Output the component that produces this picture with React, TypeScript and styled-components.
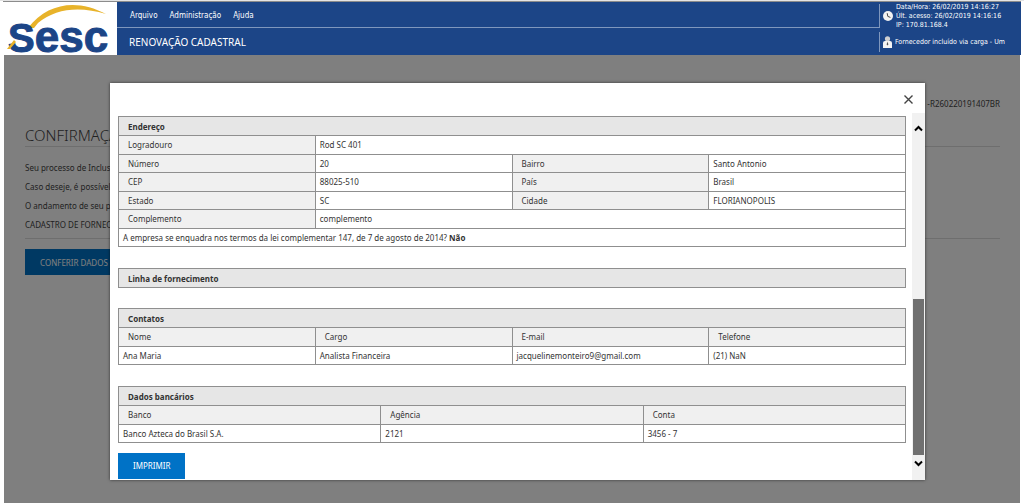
import React from "react";
import styled, { createGlobalStyle } from "styled-components";

const sans = `"Noto Sans", "Open Sans", sans-serif`;
const condensed = `"DejaVu Sans Condensed", "DejaVu Sans", sans-serif`;

const GlobalStyle = createGlobalStyle`
  *, *::before, *::after { box-sizing: border-box; }
  body { margin: 0; background: #fff; font-family: ${condensed}; font-size: 8px; color: #333; }
  button { font: inherit; border: 0; padding: 0; cursor: pointer; }
`;

const Page = styled.div`
  display: flex;
  flex-direction: column;
  min-height: 100vh;
  padding: 0 3px;
  border-top: 1px solid #e4e4e4;
`;

const Header = styled.header`
  display: flex;
  height: 54px;
  border-top: 1px solid #8c8c8c;
  background: #1c4587;
  color: #fff;
`;

const LogoBox = styled.a`
  display: block;
  flex: none;
  width: 114px;
  background: #fff;
`;

const LogoDrawing = styled.svg`
  display: block;
  overflow: visible;
`;

const HeaderMain = styled.div`
  display: flex;
  flex: 1;
  flex-direction: column;
`;

const Menu = styled.nav`
  display: flex;
  align-items: center;
  gap: 12px;
  height: 26px;
  padding: 2px 12px 0 13px;
  border-bottom: 1px solid #7f97bd;
`;

const MenuLink = styled.a`
  color: #fff;
  text-decoration: none;
`;

const PageName = styled.div`
  display: flex;
  flex: 1;
  align-items: center;
  padding: 0 12px;
  font: 10px/14px ${sans};
`;

const Session = styled.div`
  display: flex;
  flex: none;
  flex-direction: column;
  gap: 4px;
  width: 142px;
  padding-top: 2px;
  font-size: 7px;
`;

const SessionItem = styled.div<{ $tall?: boolean }>`
  display: flex;
  align-items: center;
  gap: 3px;
  height: ${(p) => (p.$tall ? 24 : 20)}px;
  padding-left: 3px;
  border-left: 1px solid #7f97bd;
  line-height: 9px;
  white-space: nowrap;
`;

const Main = styled.main`
  position: relative;
  flex: 1;
  margin: 0 1px;
  padding: 42px 20px 0 21px;
  font: 8px/19px ${sans};
  color: #444;
`;

const Protocol = styled.div`
  text-align: right;
  line-height: 14px;
`;

const Title = styled.h1`
  margin: 14px 0 11px;
  border-bottom: 1px solid #ddd;
  font: 300 15px/21px ${sans};
`;

const Line = styled.p`
  margin: 0;
`;

const Divider = styled.hr`
  margin: 4px 0 10px;
  border: 0;
  border-top: 1px solid #ddd;
`;

const ActionButton = styled.button`
  height: 26px;
  padding: 0 15px;
  background: #0072c6;
  color: #fff;
`;

const Overlay = styled.div`
  position: absolute;
  inset: 0;
  display: flex;
  padding: 28px 95px 23px 106px;
  background: rgba(0, 0, 0, 0.5);
  font: 8px/12px ${sans};
  color: #333;
`;

const Modal = styled.section`
  display: flex;
  flex: 1;
  flex-direction: column;
  background: #fff;
  box-shadow: 0 0 3px rgba(0, 0, 0, 0.6);
`;

const ModalTop = styled.div`
  display: flex;
  justify-content: flex-end;
  height: 30px;
  padding: 11px 11px 0 0;
`;

const CloseButton = styled.button`
  display: flex;
  width: 11px;
  height: 11px;
  background: none;
`;

const ModalBody = styled.div`
  display: flex;
  flex: 1;
`;

const Content = styled.div`
  flex: 1;
  padding: 3px 6px 0 8px;
`;

const ScrollTrack = styled.div`
  display: flex;
  flex: none;
  flex-direction: column;
  align-items: center;
  width: 13px;
  padding: 12px 0 13px;
  background: #f1f1f1;
`;

const ScrollArrow = styled.button`
  display: flex;
  background: none;
`;

const ScrollThumb = styled.div`
  width: 11px;
  height: 156px;
  margin: auto 0 5px;
  background: #707070;
`;

const Table = styled.table<{ $gap: number }>`
  width: 100%;
  margin-bottom: ${(p) => p.$gap}px;
  border-collapse: collapse;
  table-layout: fixed;

  tr:nth-child(even) { height: 19px; }
`;

const Cell = styled.td`
  height: 18px;
  padding: 0 4px;
  border: 1px solid #8f8f8f;
  text-align: left;
  white-space: nowrap;
`;

const Label = styled.th`
  height: 18px;
  padding: 0 9px;
  border: 1px solid #8f8f8f;
  background: #f0f0f0;
  font-weight: 400;
  text-align: left;
`;

const Heading = styled.th`
  height: 19px;
  padding: 1px 9px 0;
  border: 1px solid #8f8f8f;
  background: #e6e6e6;
  text-align: left;
`;

const PrintButton = styled(ActionButton)`
  display: block;
`;

const Logo = () => (
  <LogoDrawing width="114" height="53" viewBox="3 2 114 53" role="img" aria-label="Sesc">
    <path d="M28 28 C48 2 78 -1 106 14 C80 6 56 8 38 23 L34 28 Z" fill="#e8b32a" />
    <text x="8" y="52" fontFamily="Liberation Sans" fontWeight="700" fontSize="44" fill="#1c4587" stroke="#1c4587" strokeWidth="1">
      <tspan fontSize="40">S</tspan>esc
    </text>
    <path d="M7 49 L14 40 L16 42 L10 49 Z" fill="#e8b32a" />
  </LogoDrawing>
);

const ClockIcon = () => (
  <svg width="10" height="10" viewBox="0 0 10 10" aria-hidden="true">
    <circle cx="5" cy="5" r="5" fill="#f2f2f2" />
    <path d="M4.2 2.2 L4.8 5.4 L7.4 6.4" fill="none" stroke="#444" strokeWidth="1" />
  </svg>
);

const UserIcon = () => (
  <svg width="9" height="12" viewBox="0 0 9 12" aria-hidden="true">
    <circle cx="4.5" cy="2.8" r="2.6" fill="#d0d0d0" />
    <path d="M0 12 V7 Q0 5 2 5 H7 Q9 5 9 7 V12 Z" fill="#f4f4f4" />
    <path d="M4.5 5.5 L5.4 8.5 L4.5 9.5 L3.6 8.5 Z" fill="#555" />
  </svg>
);

const Chevron = ({ down }: { down?: boolean }) => (
  <svg width="9" height="7" viewBox="0 0 9 7" aria-hidden="true">
    <path d={down ? "M1 1.5 L4.5 5 L8 1.5" : "M1 5.5 L4.5 2 L8 5.5"} fill="none" stroke="#000" strokeWidth="2" />
  </svg>
);

const menu = ["Arquivo", "Administração", "Ajuda"];

const address = [
  ["Número", "20", "Bairro", "Santo Antonio"],
  ["CEP", "88025-510", "País", "Brasil"],
  ["Estado", "SC", "Cidade", "FLORIANOPOLIS"],
];

type GridProps = { title: string; columns: string[]; rows: string[][]; gap: number };

const DataTable = ({ title, columns, rows, gap }: GridProps) => (
  <Table $gap={gap}>
    <thead>
      <tr>
        <Heading colSpan={columns.length}>{title}</Heading>
      </tr>
      <tr>
        {columns.map((c) => (
          <Label key={c} scope="col">{c}</Label>
        ))}
      </tr>
    </thead>
    <tbody>
      {rows.map((row) => (
        <tr key={row[0]}>
          {row.map((value) => (
            <Cell key={value}>{value}</Cell>
          ))}
        </tr>
      ))}
    </tbody>
  </Table>
);

export default function App() {
  return (
    <Page>
      <GlobalStyle />
      <Header>
        <LogoBox href="#">
          <Logo />
        </LogoBox>
        <HeaderMain>
          <Menu>
            {menu.map((m) => (
              <MenuLink key={m} href="#">{m}</MenuLink>
            ))}
          </Menu>
          <PageName>RENOVAÇÃO CADASTRAL</PageName>
        </HeaderMain>
        <Session>
          <SessionItem $tall>
            <ClockIcon />
            <div>
              Data/Hora: 26/02/2019 14:16:27
              <br />
              Últ. acesso: 26/02/2019 14:16:16
              <br />
              IP: 170.81.168.4
            </div>
          </SessionItem>
          <SessionItem>
            <UserIcon />
            Fornecedor incluído via carga - Um
          </SessionItem>
        </Session>
      </Header>
      <Main>
        <Protocol>-R260220191407BR</Protocol>
        <Title>CONFIRMAÇÃO</Title>
        <Line>Seu processo de Inclusão</Line>
        <Line>Caso deseje, é possível</Line>
        <Line>O andamento de seu p</Line>
        <Line>CADASTRO DE FORNEC</Line>
        <Divider />
        <ActionButton type="button">CONFERIR DADOS</ActionButton>
        <Overlay>
          <Modal role="dialog" aria-label="Dados">
            <ModalTop>
              <CloseButton type="button" aria-label="Fechar">
                <svg width="11" height="11" viewBox="0 0 11 11" aria-hidden="true">
                  <path d="M1.5 1.5 L9.5 9.5 M9.5 1.5 L1.5 9.5" stroke="#444" strokeWidth="1.4" />
                </svg>
              </CloseButton>
            </ModalTop>
            <ModalBody>
              <Content>
                <Table $gap={21}>
                  <tbody>
                    <tr>
                      <Heading colSpan={4}>Endereço</Heading>
                    </tr>
                    <tr>
                      <Label scope="row">Logradouro</Label>
                      <Cell colSpan={3}>Rod SC 401</Cell>
                    </tr>
                    {address.map(([a, b, c, d]) => (
                      <tr key={a}>
                        <Label scope="row">{a}</Label>
                        <Cell>{b}</Cell>
                        <Label scope="row">{c}</Label>
                        <Cell>{d}</Cell>
                      </tr>
                    ))}
                    <tr>
                      <Label scope="row">Complemento</Label>
                      <Cell colSpan={3}>complemento</Cell>
                    </tr>
                    <tr>
                      <Cell colSpan={4}>
                        A empresa se enquadra nos termos da lei complementar 147, de 7 de agosto de 2014? <b>Não</b>
                      </Cell>
                    </tr>
                  </tbody>
                </Table>
                <Table $gap={20}>
                  <tbody>
                    <tr>
                      <Heading>Linha de fornecimento</Heading>
                    </tr>
                  </tbody>
                </Table>
                <DataTable
                  title="Contatos"
                  columns={["Nome", "Cargo", "E-mail", "Telefone"]}
                  rows={[["Ana Maria", "Analista Financeira", "jacquelinemonteiro9@gmail.com", "(21) NaN"]]}
                  gap={21}
                />
                <DataTable
                  title="Dados bancários"
                  columns={["Banco", "Agência", "Conta"]}
                  rows={[["Banco Azteca do Brasil S.A.", "2121", "3456 - 7"]]}
                  gap={10}
                />
                <PrintButton type="button">IMPRIMIR</PrintButton>
              </Content>
              <ScrollTrack>
                <ScrollArrow type="button" aria-label="Rolar para cima">
                  <Chevron />
                </ScrollArrow>
                <ScrollThumb />
                <ScrollArrow type="button" aria-label="Rolar para baixo">
                  <Chevron down />
                </ScrollArrow>
              </ScrollTrack>
            </ModalBody>
          </Modal>
        </Overlay>
      </Main>
    </Page>
  );
}
